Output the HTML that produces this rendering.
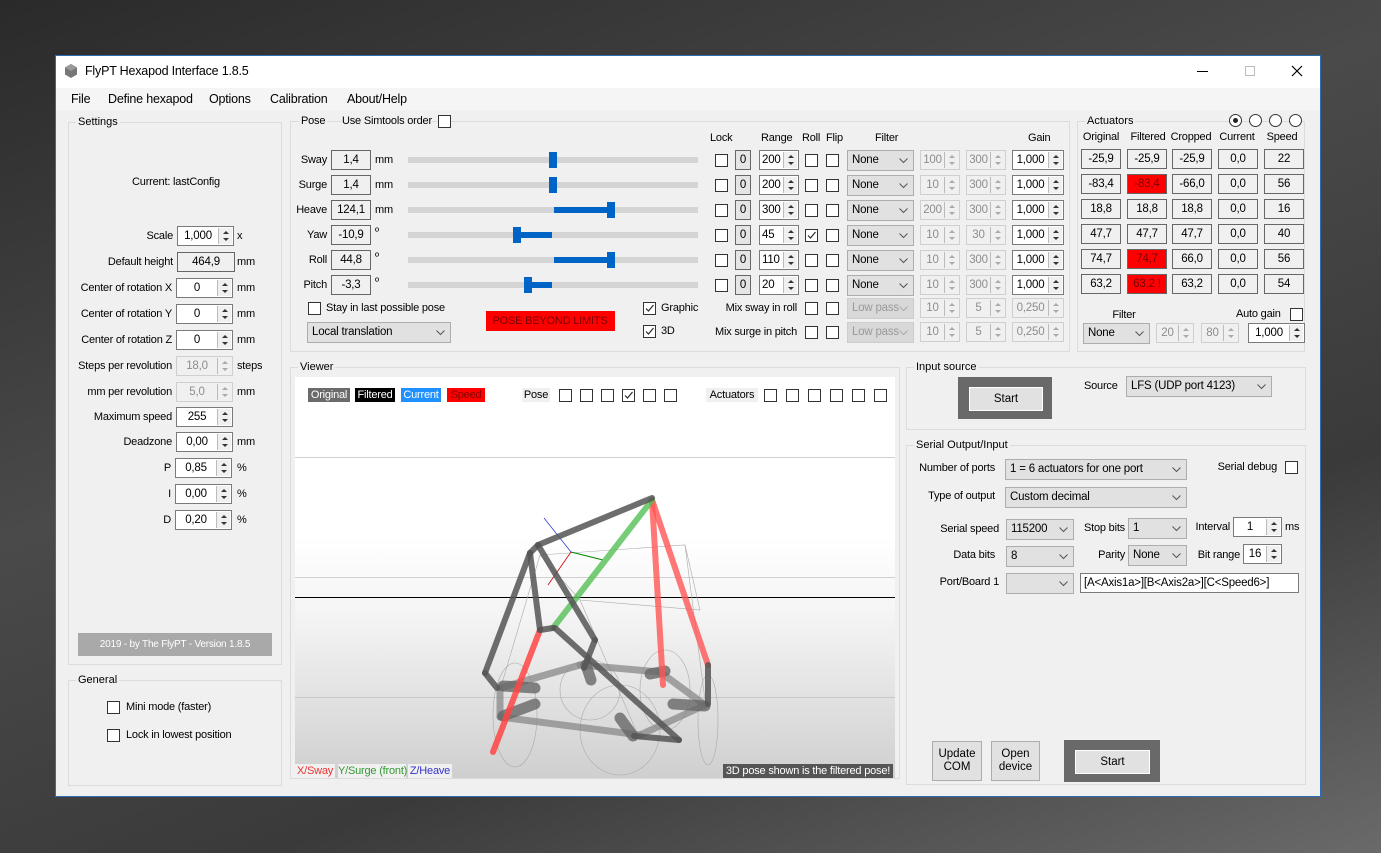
<!DOCTYPE html>
<html><head><meta charset="utf-8">
<style>
*{box-sizing:border-box;margin:0;padding:0}
body{width:1381px;height:853px;overflow:hidden;position:relative;background:linear-gradient(160deg,#2a2a2a 0%,#4a4a4a 40%,#3a3a3a 70%,#6a6a6a 100%);font-family:"Liberation Sans",sans-serif;font-size:11px;color:#000}
.a{position:absolute}
.t{position:absolute;white-space:nowrap;line-height:14px;letter-spacing:-0.2px}
.inp{position:absolute;background:#fff;border:1px solid #7a7a7a;height:20px;line-height:18px;text-align:center;font-size:11.5px;letter-spacing:-0.2px}
.dis{background:#f0f0f0;border-color:#cfcfcf;color:#8d8d8d}
.sp{position:absolute;right:1px;top:1px;bottom:1px;width:14px;border-left:1px solid #bbb;background:#f0f0f0}
.sp:before,.sp:after{content:"";position:absolute;left:4px;border-left:3px solid transparent;border-right:3px solid transparent}
.sp:before{top:3px;border-bottom:3px solid #333}
.sp:after{bottom:3px;border-top:3px solid #333}
.dis .sp:before{border-bottom-color:#aaa}.dis .sp:after{border-top-color:#aaa}
.cb{position:absolute;width:13px;height:13px;border:1px solid #333;background:#fff}
.cmb{position:absolute;background:#e1e1e1;border:1px solid #adadad;height:21px;line-height:19px;padding-left:4px;font-size:11.5px;letter-spacing:-0.2px;white-space:nowrap;overflow:hidden}
.cmb svg{position:absolute;right:5px;top:7px}
.cmb.dis{background:#d8d8d8;border-color:#ccc;color:#999}
.grp{position:absolute;border:1px solid #dcdcdc}
.grp span{position:absolute;top:-8px;left:7px;background:#f0f0f0;padding:0 2px;line-height:14px}
.ro{position:absolute;border:1px solid #666;background:#f0f0f0;height:20px;line-height:18px;text-align:center;font-size:11.5px;letter-spacing:-0.2px}
.btn{position:absolute;background:#e1e1e1;border:1px solid #adadad;text-align:center;font-size:11.5px}
</style></head><body>
<div class="a" style="left:55px;top:55px;width:1266px;height:742px;background:#f0f0f0;border:1px solid #2b6cb3"></div>
<div class="a" style="left:56px;top:56px;width:1264px;height:32px;background:#fff"></div>
<svg class="a" style="left:63px;top:63px" width="16" height="16"><polygon points="8,1 14,4.5 14,11.5 8,15 2,11.5 2,4.5" fill="#777"/><polygon points="8,1 14,4.5 8,8 2,4.5" fill="#999"/></svg>
<div class="t" style="left:85px;top:64px;font-size:12.5px">FlyPT Hexapod Interface 1.8.5</div>
<div class="a" style="left:1197px;top:71px;width:11px;height:1px;background:#000"></div>
<div class="a" style="left:1245px;top:66px;width:10px;height:10px;border:1px solid #bbb"></div>
<svg class="a" style="left:1291px;top:65px" width="12" height="12"><path d="M1 1L11 11M11 1L1 11" stroke="#000" stroke-width="1.2"/></svg>
<div class="a" style="left:56px;top:88px;width:1264px;height:22px;background:#f5f5f5"></div>
<div class="t" style="left:71px;top:92px;font-size:12.5px">File</div>
<div class="t" style="left:108px;top:92px;font-size:12.5px">Define hexapod</div>
<div class="t" style="left:209px;top:92px;font-size:12.5px">Options</div>
<div class="t" style="left:270px;top:92px;font-size:12.5px">Calibration</div>
<div class="t" style="left:347px;top:92px;font-size:12.5px">About/Help</div>
<div id="root"></div>
<script>
var h='';
function T(x,y,s,st){h+='<div class="t" style="left:'+x+'px;top:'+(y-7)+'px;'+(st||'')+'">'+s+'</div>';}
function TR(x,y,s,st){h+='<div class="t" style="right:'+(1381-x)+'px;top:'+(y-7)+'px;'+(st||'')+'">'+s+'</div>';}
function TC(x,y,s,st){h+='<div class="t" style="left:'+(x-100)+'px;width:200px;text-align:center;top:'+(y-7)+'px;'+(st||'')+'">'+s+'</div>';}
function I(x,y,w,v,sp,dis,st){h+='<div class="inp'+(dis?' dis':'')+'" style="left:'+x+'px;top:'+(y-10)+'px;width:'+w+'px;'+(sp?'padding-right:15px;':'')+(st||'')+'">'+v+(sp?'<div class="sp"></div>':'')+'</div>';}
function C(x,y,ck){h+='<div class="cb" style="left:'+x+'px;top:'+(y-6)+'px">'+(ck?'<svg width="11" height="11" style="position:absolute;left:0;top:0"><path d="M2 5.5L4.5 8L9.5 2" stroke="#222" fill="none" stroke-width="1.1"/></svg>':'')+'</div>';}
function CB(x,y,w,v,dis){h+='<div class="cmb'+(dis?' dis':'')+'" style="left:'+x+'px;top:'+(y-10)+'px;width:'+w+'px">'+v+'<svg width="9" height="6"><path d="M0.5 0.5L4.5 4.5L8.5 0.5" stroke="'+(dis?'#aaa':'#555')+'" fill="none"/></svg></div>';}
function G(x,y,w,hh,s){h+='<div class="grp" style="left:'+x+'px;top:'+y+'px;width:'+w+'px;height:'+hh+'px"><span>'+s+'</span></div>';}
function R(x,y,w,v,bg,col){h+='<div class="ro" style="left:'+x+'px;top:'+(y-10)+'px;width:'+w+'px;'+(bg?'background:'+bg+';':'')+(col?'color:'+col+';':'')+'">'+v+'</div>';}
function B(x,y,w,hh,st){h+='<div class="a" style="left:'+x+'px;top:'+y+'px;width:'+w+'px;height:'+hh+'px;'+st+'"></div>';}

G(68,122,214,543,'Settings');
TC(176,182,'Current: lastConfig');
var srows=[[236,'Scale','1,000',1,0,'x',177],[262,'Default height','464,9',0,0,'mm',177],[288,'Center of rotation X','0',1,0,'mm',176],[314,'Center of rotation Y','0',1,0,'mm',176],[340,'Center of rotation Z','0',1,0,'mm',176],[366,'Steps per revolution','18,0',1,1,'steps',176],[392,'mm per revolution','5,0',1,1,'mm',176],[417,'Maximum speed','255',1,0,'',176],[442,'Deadzone','0,00',1,0,'mm',176],[468,'P','0,85',1,0,'%',175],[494,'I','0,00',1,0,'%',175],[520,'D','0,20',1,0,'%',175]];
srows.forEach(function(r){TR(r[6]-4,r[0],r[1]);if(r[3])I(r[6],r[0],57,r[2],1,r[4]);else R(r[6],r[0],58,r[2]);T(237,r[0],r[5]);});
B(78,633,194,23,'background:#a9a9a9');
TC(175,645,'2019 - by The FlyPT - Version 1.8.5','color:#fff;font-size:10px');
G(68,680,214,106,'General');
C(107,707);T(126,707,'Mini mode (faster)');
C(107,735);T(126,735,'Lock in lowest position');

G(290,121,780,231,'');
T(300,121,'Pose','background:#f0f0f0;padding:0 2px;left:299px');T(342,121,'Use Simtools order','background:#f0f0f0');C(438,121);
T(710,138,'Lock');T(761,138,'Range');T(802,138,'Roll');T(826,138,'Flip');T(875,138,'Filter');T(1028,138,'Gain');
var pr=[['Sway','1,4','mm',552,552,'200','100'],['Surge','1,4','mm',552,552,'200','10'],['Heave','124,1','mm',554,610,'300','200'],['Yaw','-10,9','º',516,552,'45','10'],['Roll','44,8','º',554,610,'110','10'],['Pitch','-3,3','º',527,552,'20','10']];
pr.forEach(function(r,i){var y=160+25*i;TR(327,y,r[0]);R(331,y,40,r[1]);T(375,r[2]=='mm'?y:y-3,r[2]);
B(408,y-3,290,6,'background:#d4d4d4');
var lo=Math.min(r[3],r[4]),hi=Math.max(r[3],r[4]);if(hi>lo)B(lo,y-3,hi-lo,6,'background:#0063c6');
var th=(r[0]=='Yaw'||r[0]=='Pitch')?r[3]:r[4];B(th-3,y-8,8,16,'background:#0063c6');
C(715,y);R(735,y,16,'0','#e5e5e5');h=h.replace(/(<div class="ro" style="left:735px[^"]*)"/,'$1border-color:#adadad"');
I(759,y,40,r[5],1,0,'text-align:left;padding-left:2px');
C(805,y,i==3);C(826,y);CB(847,y,67,'None');
I(920,y,40,r[6],1,1);I(966,y,40,r[0]=='Yaw'?'30':'300',1,1);I(1012,y,52,'1,000',1);});
C(308,308);T(326,308,'Stay in last possible pose');
B(486,311,129,20,'background:#ff0000');TC(550,321,'POSE BEYOND LIMITS','color:#7a0000;font-size:11px');
CB(307,332,144,'Local translation');
C(643,308,1);T(661,308,'Graphic');C(643,331,1);T(661,331,'3D');
TR(797,308,'Mix sway in roll');TR(797,332,'Mix surge in pitch');
[308,332].forEach(function(y){C(805,y);C(826,y);CB(847,y,67,'Low pass',1);I(920,y,40,'10',1,1);I(966,y,40,'5',1,1);I(1012,y,52,'0,250',1,1);});

G(1077,121,228,231,'Actuators');
[1235,1255,1275,1295].forEach(function(x,i){h+='<div class="a" style="left:'+(x-6)+'px;top:114px;width:13px;height:13px;border:1px solid #333;border-radius:50%;background:#fff">'+(i==0?'<div class="a" style="left:3px;top:3px;width:5px;height:5px;border-radius:50%;background:#222"></div>':'')+'</div>';});
TC(1101,137,'Original');TC(1148,137,'Filtered');TC(1191,137,'Cropped');TC(1237,137,'Current');TC(1282,137,'Speed');
var ad=[['-25,9','-25,9','-25,9','22',0],['-83,4','-83,4','-66,0','56',1],['18,8','18,8','18,8','16',0],['47,7','47,7','47,7','40',0],['74,7','74,7','66,0','56',1],['63,2','63,2 !','63,2','54',1]];
ad.forEach(function(r,i){var y=159+25*i;R(1081,y,40,r[0]);R(1127,y,40,r[1],r[4]?'#ff0000':'',r[4]?'#7a0000':'');R(1172,y,40,r[2]);R(1218,y,40,'0,0');R(1264,y,40,r[3]);});
TC(1124,315,'Filter');T(1236,314,'Auto gain');C(1290,314);
CB(1083,333,67,'None');I(1156,333,38,'20',1,1);I(1201,333,38,'80',1,1);I(1248,333,57,'1,000',1);

G(290,367,610,412,'Viewer');
document.getElementById('root').innerHTML=h;h='';
</script>
<div class="a" style="left:295px;top:377px;width:600px;height:401px;background:linear-gradient(#fff 0,#fff 80px,#fff 160px,#f4f4f4 240px,#e2e2e2 320px,#cfcfcf 401px)"></div>
<svg class="a" style="left:295px;top:377px" width="600" height="401">
<line x1="0" y1="80.5" x2="600" y2="80.5" stroke="#d0d0d0"/>
<line x1="0" y1="200.5" x2="600" y2="200.5" stroke="#d0d0d0"/>
<line x1="0" y1="320.5" x2="600" y2="320.5" stroke="#c8c8c8"/>
<line x1="0" y1="220.5" x2="600" y2="220.5" stroke="#000"/>
<g transform="translate(-295,-377)">
<g stroke="#aaa" stroke-width="0.6" fill="none">
<ellipse cx="515" cy="715" rx="22" ry="52"/><ellipse cx="590" cy="690" rx="30" ry="30"/><ellipse cx="665" cy="690" rx="25" ry="40"/><ellipse cx="620" cy="730" rx="40" ry="45"/><ellipse cx="708" cy="720" rx="10" ry="45"/>
<path d="M540 555L685 545L700 610L580 600ZM540 555L500 690M685 545L705 700M580 600L640 740"/>
</g>
<g stroke="#888" stroke-opacity="0.75" stroke-width="7" stroke-linecap="round">
<line x1="500" y1="688" x2="580" y2="665"/><line x1="580" y1="665" x2="660" y2="672"/><line x1="660" y1="672" x2="705" y2="705"/><line x1="705" y1="705" x2="640" y2="735"/><line x1="640" y1="735" x2="500" y2="717"/><line x1="500" y1="717" x2="500" y2="688"/>
</g>
<g stroke="#666" stroke-opacity="0.8" stroke-width="11" stroke-linecap="round">
<line x1="503" y1="686" x2="535" y2="688"/><line x1="503" y1="716" x2="535" y2="704"/><line x1="586" y1="665" x2="591" y2="680"/><line x1="650" y1="674" x2="665" y2="671"/><line x1="673" y1="704" x2="705" y2="706"/><line x1="620" y1="718" x2="633" y2="736"/>
</g>
<line x1="544" y1="518" x2="571" y2="552" stroke="#2233cc" stroke-width="0.7"/>
<line x1="571" y1="552" x2="603" y2="560" stroke="#008800" stroke-width="1"/>
<line x1="571" y1="552" x2="548" y2="585" stroke="#cc0000" stroke-width="0.8"/>
<g stroke-width="6" stroke-linecap="round">
<line x1="540" y1="630" x2="493" y2="752" stroke="#ff4444" stroke-opacity="0.85"/>
<line x1="652" y1="500" x2="663" y2="685" stroke="#ff5555" stroke-opacity="0.8"/>
<line x1="652" y1="500" x2="708" y2="665" stroke="#ff5555" stroke-opacity="0.8"/>
<line x1="652" y1="500" x2="553" y2="628" stroke="#55c055" stroke-opacity="0.8"/>
<g stroke="#555" stroke-opacity="0.85">
<line x1="538" y1="545" x2="652" y2="498"/><line x1="538" y1="545" x2="530" y2="553"/>
<line x1="530" y1="553" x2="485" y2="673"/><line x1="485" y1="673" x2="497" y2="688"/>
<line x1="530" y1="553" x2="540" y2="630"/><line x1="540" y1="630" x2="553" y2="628"/>
<line x1="538" y1="545" x2="595" y2="640"/><line x1="595" y1="640" x2="584" y2="668"/>
<line x1="555" y1="628" x2="679" y2="740"/><line x1="634" y1="736" x2="679" y2="740"/>
<line x1="708" y1="665" x2="708" y2="704"/>
</g></g></g></svg>
<div id="root2"></div>
<script>
var h='';
function T(x,y,s,st){h+='<div class="t" style="left:'+x+'px;top:'+(y-7)+'px;'+(st||'')+'">'+s+'</div>';}
function TR(x,y,s,st){h+='<div class="t" style="right:'+(1381-x)+'px;top:'+(y-7)+'px;'+(st||'')+'">'+s+'</div>';}
function I(x,y,w,v,sp,dis,st){h+='<div class="inp'+(dis?' dis':'')+'" style="left:'+x+'px;top:'+(y-10)+'px;width:'+w+'px;'+(sp?'padding-right:15px;':'')+(st||'')+'">'+v+(sp?'<div class="sp"></div>':'')+'</div>';}
function C(x,y,ck){h+='<div class="cb" style="left:'+x+'px;top:'+(y-6)+'px">'+(ck?'<svg width="11" height="11" style="position:absolute;left:0;top:0"><path d="M2 5.5L4.5 8L9.5 2" stroke="#222" fill="none" stroke-width="1.1"/></svg>':'')+'</div>';}
function CB(x,y,w,v,dis){h+='<div class="cmb'+(dis?' dis':'')+'" style="left:'+x+'px;top:'+(y-10)+'px;width:'+w+'px">'+v+'<svg width="9" height="6"><path d="M0.5 0.5L4.5 4.5L8.5 0.5" stroke="'+(dis?'#aaa':'#555')+'" fill="none"/></svg></div>';}
function G(x,y,w,hh,s){h+='<div class="grp" style="left:'+x+'px;top:'+y+'px;width:'+w+'px;height:'+hh+'px"><span>'+s+'</span></div>';}
function L(x,y,w,s,bg,col){h+='<div class="t" style="left:'+x+'px;top:'+(y-7)+'px;width:'+w+'px;text-align:center;background:'+bg+';color:'+col+'">'+s+'</div>';}
L(308,395,42,'Original','#6b6b6b','#fff');L(355,395,40,'Filtered','#000','#fff');L(401,395,40,'Current','#1e90ff','#fff');L(447,395,38,'Speed','#ff0000','#800');
L(522,395,28,'Pose','#f0f0f0','#000');
[559,580,601,622,643,664].forEach(function(x,i){C(x,395,i==3);});
L(706,395,52,'Actuators','#f0f0f0','#000');
[764,786,808,830,852,874].forEach(function(x){C(x,395);});
L(295,771,40,'X/Sway','#f0f0f0','#e33');L(338,771,68,'Y/Surge (front)','#f0f0f0','#393');L(408,771,44,'Z/Heave','#f0f0f0','#33c');
L(723,771,170,'3D pose shown is the filtered pose!','#555','#fff');
G(906,367,400,63,'Input source');
h+='<div class="a" style="left:958px;top:377px;width:94px;height:42px;background:#696969"></div>';
h+='<div class="btn" style="left:969px;top:387px;width:74px;height:24px;line-height:22px;border:1px solid #fff">Start</div>';
T(1084,386,'Source');CB(1126,386,146,'LFS (UDP port 4123)');
G(906,445,400,340,'Serial Output/Input');
TR(995,468,'Number of ports');CB(1005,469,182,'1 = 6 actuators for one port');
TR(1277,467,'Serial debug');C(1285,467);
TR(995,496,'Type of output');CB(1005,497,182,'Custom decimal');
TR(999,529,'Serial speed');CB(1006,529,68,'115200');
TR(1125,528,'Stop bits');CB(1128,528,59,'1');
TR(1230,527,'Interval');I(1233,527,49,'1',1);T(1285,527,'ms');
TR(995,555,'Data bits');CB(1006,556,68,'8');
TR(1125,555,'Parity');CB(1128,555,59,'None');
TR(1240,555,'Bit range');I(1243,554,39,'16',1);
TR(999,582,'Port/Board 1');CB(1006,583,68,'');
I(1080,583,219,'[A&lt;Axis1a&gt;][B&lt;Axis2a&gt;][C&lt;Speed6&gt;]',0,0,'text-align:left;padding-left:3px');
h+='<div class="btn" style="left:932px;top:741px;width:50px;height:40px;padding-top:6px;line-height:13px">Update<br>COM</div>';
h+='<div class="btn" style="left:991px;top:741px;width:49px;height:40px;padding-top:6px;line-height:13px">Open<br>device</div>';
h+='<div class="a" style="left:1064px;top:740px;width:96px;height:42px;background:#696969"></div>';
h+='<div class="btn" style="left:1075px;top:750px;width:75px;height:24px;line-height:22px;border:1px solid #fff">Start</div>';
document.getElementById('root2').innerHTML=h;
</script>
</body></html>
